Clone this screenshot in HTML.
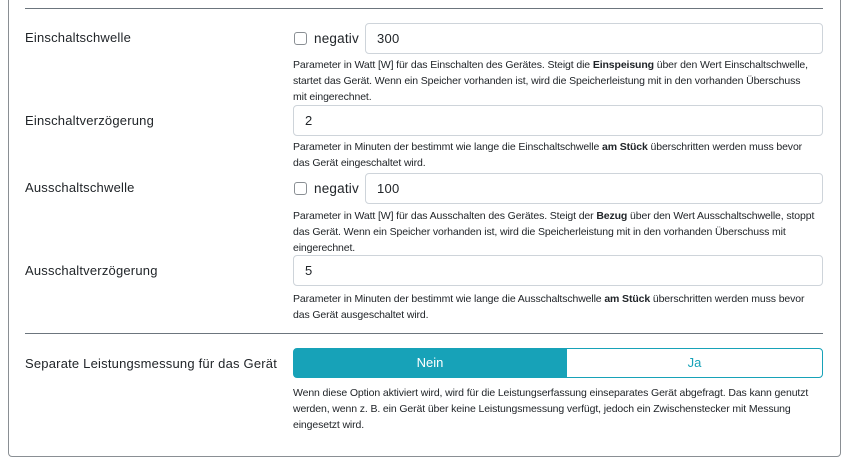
<!DOCTYPE html>
<html><head><meta charset="utf-8"><style>
*{box-sizing:border-box;margin:0;padding:0}
body{width:849px;height:463px;background:#fff;font-family:"Liberation Sans",sans-serif;color:#212529;position:relative;overflow:hidden}
.card{position:absolute;left:8px;top:-10px;width:833px;height:467px;border:1px solid #8a8f94;border-radius:4px}
.hr{position:absolute;left:25px;width:798px;height:1px;background:#6c757d}
.lbl{position:absolute;left:25px;font-size:13px;letter-spacing:0.2px;line-height:16px}
.inp{position:absolute;height:31px;border:1px solid #ced4da;border-radius:4px;font-size:13px;letter-spacing:0.3px;line-height:29px;padding-left:11px;right:26px}
.chk{position:absolute;left:294px;width:13px;height:13px;border:1px solid #8a8f94;border-radius:3px}
.neg{position:absolute;left:314px;font-size:13.5px;letter-spacing:0.2px;line-height:16px}
.help{position:absolute;left:293px;font-size:10.5px;letter-spacing:-0.12px;line-height:16px;white-space:nowrap;color:#212529}
.btn{position:absolute;top:348px;height:30px;font-size:13px;line-height:28px;text-align:center}
</style></head><body>
<div class="card"></div>
<div class="hr" style="top:8px"></div>

<div class="lbl" style="top:30px">Einschaltschwelle</div>
<div class="chk" style="top:32px"></div><div class="neg" style="top:31px">negativ</div>
<div class="inp" style="top:23px;left:365px">300</div>
<div class="help" style="top:57px">Parameter in Watt [W] für das Einschalten des Gerätes. Steigt die <b>Einspeisung</b> über den Wert Einschaltschwelle,<br>startet das Gerät. Wenn ein Speicher vorhanden ist, wird die Speicherleistung mit in den vorhanden Überschuss<br>mit eingerechnet.</div>

<div class="lbl" style="top:113px">Einschaltverzögerung</div>
<div class="inp" style="top:105px;left:293px">2</div>
<div class="help" style="top:139px">Parameter in Minuten der bestimmt wie lange die Einschaltschwelle <b>am Stück</b> überschritten werden muss bevor<br>das Gerät eingeschaltet wird.</div>

<div class="lbl" style="top:180px">Ausschaltschwelle</div>
<div class="chk" style="top:182px"></div><div class="neg" style="top:181px">negativ</div>
<div class="inp" style="top:173px;left:365px">100</div>
<div class="help" style="top:208px">Parameter in Watt [W] für das Ausschalten des Gerätes. Steigt der <b>Bezug</b> über den Wert Ausschaltschwelle, stoppt<br>das Gerät. Wenn ein Speicher vorhanden ist, wird die Speicherleistung mit in den vorhanden Überschuss mit<br>eingerechnet.</div>

<div class="lbl" style="top:263px">Ausschaltverzögerung</div>
<div class="inp" style="top:255px;left:293px">5</div>
<div class="help" style="top:291px">Parameter in Minuten der bestimmt wie lange die Ausschaltschwelle <b>am Stück</b> überschritten werden muss bevor<br>das Gerät ausgeschaltet wird.</div>

<div class="hr" style="top:333px"></div>
<div class="lbl" style="top:356px">Separate Leistungsmessung für das Gerät</div>
<div class="btn" style="left:293px;width:274px;background:#17a2b8;border:1px solid #17a2b8;color:#fff;border-radius:4px 0 0 4px">Nein</div>
<div class="btn" style="left:566px;width:257px;border:1px solid #17a2b8;color:#17a2b8;border-radius:0 4px 4px 0">Ja</div>
<div class="help" style="top:385px">Wenn diese Option aktiviert wird, wird für die Leistungserfassung einseparates Gerät abgefragt. Das kann genutzt<br>werden, wenn z. B. ein Gerät über keine Leistungsmessung verfügt, jedoch ein Zwischenstecker mit Messung<br>eingesetzt wird.</div>
</body></html>
